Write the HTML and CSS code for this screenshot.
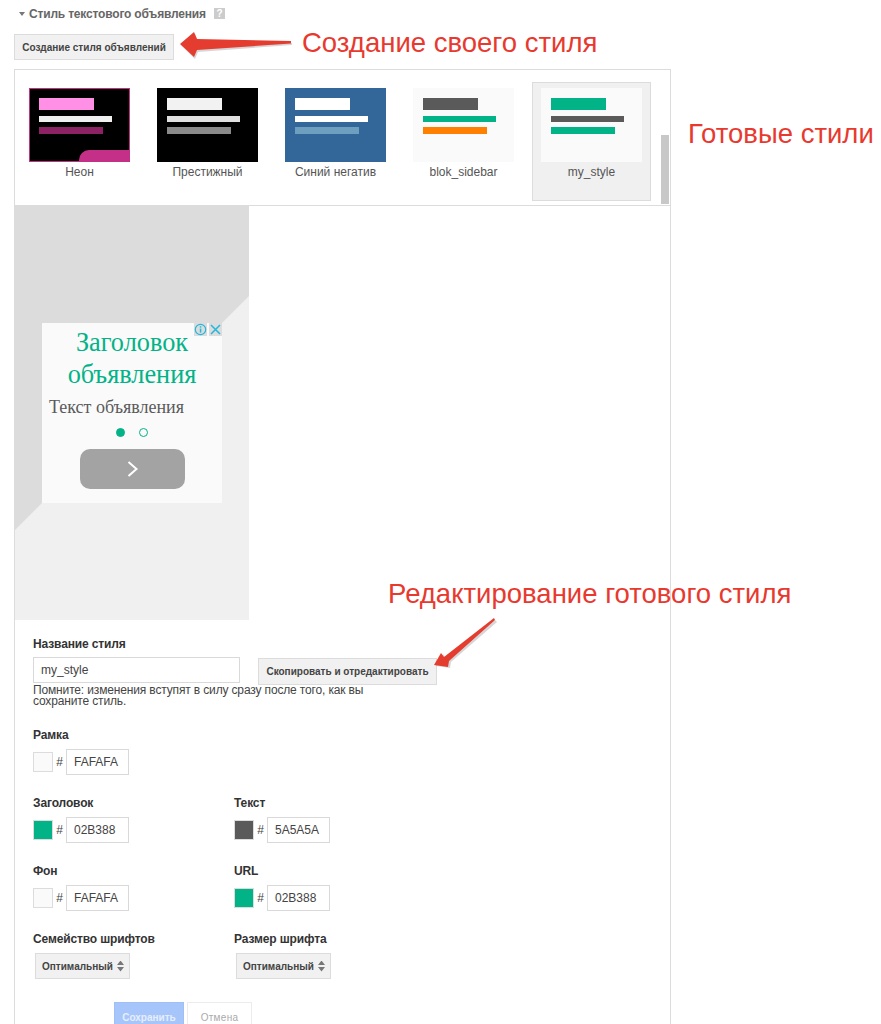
FILE: index.html
```html
<!DOCTYPE html>
<html lang="en">
<head>
    <meta charset="UTF-8">
    <meta name="viewport" content="width=device-width, initial-scale=1.0">
    <title>Стиль текстового объявления</title>
    <link rel="stylesheet" href="styles.css">
</head>
<body>
    <div class="page">
        <div class="section-title">
            <span class="caret"></span>
            <span>Стиль текстового объявления</span>
            <span class="help">?</span>
        </div>

        <button class="button create-btn">Создание стиля объявлений</button>

        <div class="panel">
            <div class="gallery">
                <div class="tile">
                    <div class="thumb thumb-neon">
                        <div class="bar bar-title"></div>
                        <div class="bar bar-text"></div>
                        <div class="bar bar-url"></div>
                        <div class="neon-tab"></div>
                    </div>
                    <div class="tile-name">Неон</div>
                </div>
                <div class="tile">
                    <div class="thumb thumb-prestige">
                        <div class="bar bar-title"></div>
                        <div class="bar bar-text"></div>
                        <div class="bar bar-url"></div>
                    </div>
                    <div class="tile-name">Престижный</div>
                </div>
                <div class="tile">
                    <div class="thumb thumb-blue">
                        <div class="bar bar-title"></div>
                        <div class="bar bar-text"></div>
                        <div class="bar bar-url"></div>
                    </div>
                    <div class="tile-name">Синий негатив</div>
                </div>
                <div class="tile">
                    <div class="thumb thumb-sidebar">
                        <div class="bar bar-title"></div>
                        <div class="bar bar-text"></div>
                        <div class="bar bar-url"></div>
                    </div>
                    <div class="tile-name">blok_sidebar</div>
                </div>
                <div class="tile tile-selected">
                    <div class="thumb thumb-mine">
                        <div class="bar bar-title"></div>
                        <div class="bar bar-text"></div>
                        <div class="bar bar-url"></div>
                    </div>
                    <div class="tile-name">my_style</div>
                </div>
                <div class="scrollbar"></div>
            </div>

            <div class="preview">
                <div class="preview-shade"></div>
                <div class="ad">
                    <div class="ad-icons">
                        <span class="ad-icon">
                            <svg width="13" height="13" viewBox="0 0 13 13">
                                <circle cx="6.5" cy="6.5" r="5.2" fill="none" stroke="#22b8dc" stroke-width="1.2"/>
                                <rect x="5.8" y="5.6" width="1.5" height="4" fill="#22b8dc"/>
                                <rect x="5.8" y="3.2" width="1.5" height="1.4" fill="#22b8dc"/>
                            </svg>
                        </span>
                        <span class="ad-icon">
                            <svg width="13" height="13" viewBox="0 0 13 13">
                                <path d="M2 2 L11 11 M11 2 L2 11" fill="none" stroke="#22b8dc" stroke-width="1.5"/>
                            </svg>
                        </span>
                    </div>
                    <div class="ad-title">Заголовок объявления</div>
                    <div class="ad-text">Текст объявления</div>
                    <div class="ad-dots">
                        <span class="dot dot-on"></span>
                        <span class="dot"></span>
                    </div>
                    <div class="ad-next">
                        <svg width="14" height="20" viewBox="0 0 14 20">
                            <path d="M2.5 3 L10.5 10 L2.5 17" fill="none" stroke="#fff" stroke-width="2"/>
                        </svg>
                    </div>
                </div>
            </div>

            <div class="form">
                <div class="label">Название стиля</div>
                <div class="name-row">
                    <input class="input name-input" value="my_style">
                    <button class="button copy-btn">Скопировать и отредактировать</button>
                </div>
                <p class="note">Помните: изменения вступят в силу сразу после того, как вы сохраните стиль.</p>

                <div class="field-grid">
                    <div class="field">
                        <div class="label">Рамка</div>
                        <div class="color-row">
                            <span class="swatch swatch-light"></span>
                            <span class="hash">#</span>
                            <input class="input color-input" value="FAFAFA">
                        </div>
                    </div>
                    <div class="field"></div>

                    <div class="field">
                        <div class="label">Заголовок</div>
                        <div class="color-row">
                            <span class="swatch swatch-green"></span>
                            <span class="hash">#</span>
                            <input class="input color-input" value="02B388">
                        </div>
                    </div>
                    <div class="field">
                        <div class="label">Текст</div>
                        <div class="color-row">
                            <span class="swatch swatch-dark"></span>
                            <span class="hash">#</span>
                            <input class="input color-input" value="5A5A5A">
                        </div>
                    </div>

                    <div class="field">
                        <div class="label">Фон</div>
                        <div class="color-row">
                            <span class="swatch swatch-light"></span>
                            <span class="hash">#</span>
                            <input class="input color-input" value="FAFAFA">
                        </div>
                    </div>
                    <div class="field">
                        <div class="label">URL</div>
                        <div class="color-row">
                            <span class="swatch swatch-green"></span>
                            <span class="hash">#</span>
                            <input class="input color-input" value="02B388">
                        </div>
                    </div>

                    <div class="field">
                        <div class="label">Семейство шрифтов</div>
                        <div class="select">
                            <span>Оптимальный</span>
                            <span class="select-arrows"></span>
                        </div>
                    </div>
                    <div class="field">
                        <div class="label">Размер шрифта</div>
                        <div class="select">
                            <span>Оптимальный</span>
                            <span class="select-arrows"></span>
                        </div>
                    </div>
                </div>

                <div class="actions">
                    <button class="button save-btn">Сохранить</button>
                    <button class="button cancel-btn">Отмена</button>
                </div>
            </div>
        </div>

        <!-- notes drawn over the screenshot -->
        <svg class="arrows" width="881" height="1024" viewBox="0 0 881 1024">
            <path class="arrow-shadow" d="M181 45 L195 34 L198 41 L292 43 L292 45 L198 52 L195 59 Z"/>
            <path class="arrow" d="M180 44 L194 32 L197 39 L291 41 L291 43.5 L197 50 L194 57 Z"/>
            <path class="arrow-shadow" d="M436 666 L443 654 L446 658 L495 620 L497 622 L451 662 L450 668 Z"/>
            <path class="arrow" d="M434 665 L441 653 L444 657 L494 618 L495 620 L449 661 L448 667 Z"/>
        </svg>
        <div class="note-text note-create">Создание своего стиля</div>
        <div class="note-text note-ready">Готовые стили</div>
        <div class="note-text note-edit">Редактирование готового стиля</div>
    </div>
</body>
</html>
```

FILE: styles.css
```css
html, body {
    margin: 0;
    height: 1024px;
    overflow: hidden;
    background: white;
}
body {
    font-family: "Liberation Sans", Arial, sans-serif;
    font-size: 12px;
    color: #333;
}
.page {
    position: relative;
    width: 881px;
    height: 1024px;
    padding: 7px 0 0 14px;
    box-sizing: border-box;
}
.section-title {
    display: flex;
    align-items: center;
    height: 13px;
    padding-left: 5px;
    font-weight: bold;
    font-size: 12px;
    letter-spacing: -0.18px;
    color: #666;
}
.caret {
    width: 0;
    height: 0;
    margin-right: 4px;
    border-left: 3px solid transparent;
    border-right: 3px solid transparent;
    border-top: 4px solid #777;
}
.help {
    width: 11px;
    height: 11px;
    margin-left: 8px;
    background: #ccc;
    color: white;
    font-size: 10px;
    line-height: 11px;
    text-align: center;
}
.button {
    display: block;
    box-sizing: border-box;
    padding: 0;
    font-family: "Liberation Sans", Arial, sans-serif;
    font-size: 10px;
    font-weight: bold;
    color: #444;
    background: #f1f1f1;
    border: 1px solid #dcdcdc;
}
.create-btn {
    width: 160px;
    height: 26px;
    margin-top: 14px;
}
.panel {
    width: 657px;
    height: 1000px;
    margin-top: 9px;
    border: 1px solid #dcdcdc;
    box-sizing: border-box;
}
.gallery {
    position: relative;
    display: flex;
    gap: 9px;
    height: 136px;
    padding: 12px 0 0 5px;
    box-sizing: border-box;
    border-bottom: 1px solid #dcdcdc;
}
.tile {
    width: 119px;
    height: 119px;
    padding-top: 5px;
    box-sizing: border-box;
    border: 1px solid transparent;
}
.tile-selected {
    background: #f0f0f0;
    border-color: #dcdcdc;
}
.thumb {
    position: relative;
    width: 101px;
    height: 74px;
    margin: 0 auto;
    padding: 10px 0 0 10px;
    box-sizing: border-box;
    overflow: hidden;
}
.bar-title {
    width: 55px;
    height: 12px;
}
.bar-text {
    width: 73px;
    height: 6px;
    margin-top: 6px;
}
.bar-url {
    width: 64px;
    height: 7px;
    margin-top: 5px;
}
.thumb-neon {
    background: black;
    border: 1px solid #c43088;
    padding: 9px 0 0 9px;
}
.thumb-neon .bar-title { background: #ff90e6; }
.thumb-neon .bar-text { background: #f0f0f0; }
.thumb-neon .bar-url { background: #8c2264; }
.neon-tab {
    position: absolute;
    right: 0;
    bottom: 0;
    width: 50px;
    height: 11px;
    background: #c43088;
    border-top-left-radius: 10px;
}
.thumb-prestige { background: black; }
.thumb-prestige .bar-title { background: #f2f2f2; }
.thumb-prestige .bar-text { background: #e0e0e0; }
.thumb-prestige .bar-url { background: #8a8a8a; }
.thumb-blue { background: #336699; }
.thumb-blue .bar-title { background: white; }
.thumb-blue .bar-text { background: white; }
.thumb-blue .bar-url { background: #6f9fbf; }
.thumb-sidebar, .thumb-mine { background: #fafafa; }
.thumb-sidebar .bar-title { background: #5a5a5a; }
.thumb-sidebar .bar-text { background: #02b388; }
.thumb-sidebar .bar-url { background: #ff8000; }
.thumb-mine .bar-title { background: #02b388; }
.thumb-mine .bar-text { background: #5a5a5a; }
.thumb-mine .bar-url { background: #02b388; }
.tile-name {
    margin-top: 3px;
    text-align: center;
    color: #555;
    line-height: 14px;
}
.scrollbar {
    position: absolute;
    right: 1px;
    bottom: 1px;
    width: 8px;
    height: 69px;
    background: #c8c8c8;
}
.preview {
    position: relative;
    width: 234px;
    height: 414px;
    padding: 117px 0 0 27px;
    box-sizing: border-box;
    background: #f0f0f0;
}
.preview-shade {
    position: absolute;
    inset: 0;
    background: #dcdcdc;
    clip-path: polygon(0 0, 234px 0, 234px 90px, 0 324px);
}
.ad {
    position: relative;
    width: 180px;
    height: 180px;
    background: #fafafa;
    font-family: "Liberation Serif", "Times New Roman", serif;
}
.ad-icons {
    position: absolute;
    top: 0;
    right: 0;
    display: flex;
    gap: 2px;
}
.ad-icon {
    display: block;
    width: 13px;
    height: 13px;
    background: #dcdcdc;
}
.ad-title {
    padding: 4px 20px 0;
    font-size: 26.3px;
    line-height: 32px;
    text-align: center;
    color: #02b388;
}
.ad-text {
    margin-top: 6px;
    padding-left: 7px;
    font-size: 18px;
    line-height: 20px;
    color: #5a5a5a;
}
.ad-dots {
    display: flex;
    justify-content: center;
    gap: 14px;
    margin-top: 11px;
    padding-right: 1px;
}
.dot {
    width: 9px;
    height: 9px;
    box-sizing: border-box;
    border: 1px solid #02b388;
    border-radius: 50%;
}
.dot-on { background: #02b388; }
.ad-next {
    display: flex;
    align-items: center;
    justify-content: center;
    width: 105px;
    height: 40px;
    margin: 12px 0 0 38px;
    border-radius: 10px;
    background: #a3a3a3;
}
.form {
    padding: 17px 0 0 18px;
}
.label {
    height: 14px;
    line-height: 14px;
    color: #333;
    font-weight: bold;
    letter-spacing: -0.13px;
}
.input {
    box-sizing: border-box;
    height: 26px;
    padding: 0 7px;
    font-family: "Liberation Sans", Arial, sans-serif;
    font-size: 12px;
    color: #444;
    background: white;
    border: 1px solid #d9d9d9;
    border-radius: 0;
    outline: none;
}
.name-row {
    display: flex;
    align-items: flex-start;
    gap: 18px;
    margin-top: 6px;
}
.name-input {
    width: 207px;
}
.copy-btn {
    width: 179px;
    height: 27px;
    margin-top: 1px;
}
.note {
    width: 340px;
    margin: 0;
    font-size: 12px;
    line-height: 11px;
    letter-spacing: -0.15px;
    color: #444;
}
.field-grid {
    display: grid;
    grid-template-columns: 201px 201px;
    grid-auto-rows: 68px;
    margin-top: 21px;
}
.color-row {
    display: flex;
    align-items: center;
    margin-top: 7px;
}
.swatch {
    width: 20px;
    height: 20px;
    box-sizing: border-box;
    border: 1px solid #dcdcdc;
}
.swatch-light { background: #fafafa; }
.swatch-green { background: #02b388; }
.swatch-dark { background: #5a5a5a; }
.hash {
    width: 13px;
    text-align: center;
    color: #444;
}
.color-input {
    width: 63px;
}
.select {
    display: flex;
    align-items: center;
    justify-content: space-between;
    box-sizing: border-box;
    width: 95px;
    height: 26px;
    margin: 7px 0 0 2px;
    padding: 0 5px 0 6px;
    font-size: 10px;
    font-weight: bold;
    color: #444;
    background: #f1f1f1;
    border: 1px solid #dcdcdc;
}
.select-arrows {
    width: 7px;
    height: 11px;
    background: #777;
    clip-path: polygon(50% 0, 100% 42%, 0 42%, 50% 0, 0 58%, 100% 58%, 50% 100%, 0 58%);
}
.actions {
    display: flex;
    gap: 3px;
    margin: 2px 0 0 81px;
}
.save-btn {
    width: 70px;
    height: 30px;
    color: #e6eefc;
    background: #a6c5fa;
    border-color: #a0bff5;
}
.cancel-btn {
    width: 65px;
    height: 30px;
    font-weight: normal;
    letter-spacing: 0.3px;
    color: #aaa;
    background: white;
    border-color: #ececec;
}
.arrows {
    position: absolute;
    top: 0;
    left: 0;
    pointer-events: none;
}
.arrow { fill: #e53c30; }
.arrow-shadow { fill: rgba(0, 0, 0, 0.16); }
.note-text {
    position: absolute;
    font-size: 27.5px;
    line-height: 30px;
    color: #e8392f;
    white-space: nowrap;
}
.note-create { left: 302px; top: 28px; }
.note-ready { left: 688px; top: 119px; }
.note-edit { left: 388px; top: 579px; }
```
